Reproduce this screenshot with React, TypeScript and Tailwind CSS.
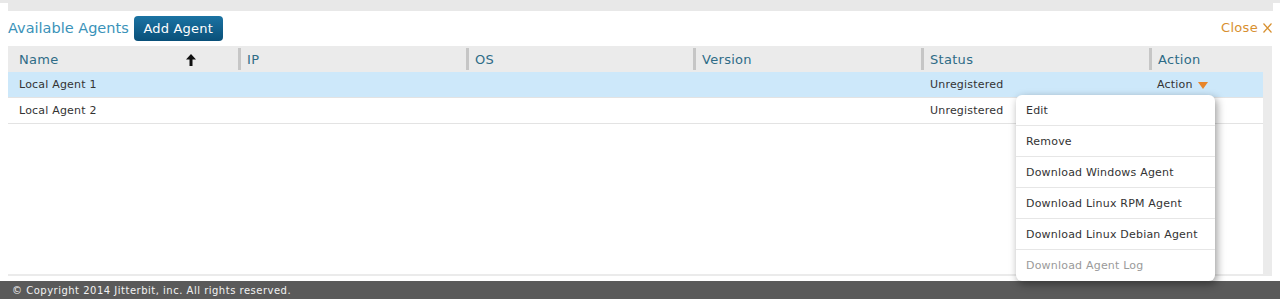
const columns = [
  { key: 'name', label: 'Name', width: 'w-[230px]', first: true },
  { key: 'ip', label: 'IP', width: 'w-[228px]' },
  { key: 'os', label: 'OS', width: 'w-[227px]' },
  { key: 'version', label: 'Version', width: 'w-[228px]' },
  { key: 'status', label: 'Status', width: 'w-[228px]' },
  { key: 'action', label: 'Action', width: 'flex-1' }
];

const agents = [
  { name: 'Local Agent 1', status: 'Unregistered', selected: true },
  { name: 'Local Agent 2', status: 'Unregistered', selected: false }
];

const menuItems = [
  { label: 'Edit' },
  { label: 'Remove' },
  { label: 'Download Windows Agent' },
  { label: 'Download Linux RPM Agent' },
  { label: 'Download Linux Debian Agent' },
  { label: 'Download Agent Log', disabled: true }
];

export default function App() {
  return (
    <div
      className="relative w-[1280px] h-[299px] bg-white flex flex-col overflow-hidden text-[#333]"
      style={{ fontFamily: '"DejaVu Sans", Verdana, sans-serif' }}
    >
      {/* top strip */}
      <div className="h-[3px] bg-[#e8e8e8]" />
      <div className="h-[8px] ml-[8px] mr-[7px] bg-[#e8e8e8]" />

      {/* Header */}
      <div className="h-[35px] flex items-center px-[8px]">
        <span className="text-[14.5px] text-[#3a92b9] mr-[5px] pt-[1px]">Available Agents</span>
        <button className="h-[25px] w-[89px] rounded-[4px] bg-gradient-to-b from-[#1b73a3] to-[#0a5079] text-white text-[13px] leading-none tracking-[0.2px]">
          Add Agent
        </button>
        <div className="ml-auto flex items-center gap-[5px] text-[13px] text-[#d8902f] tracking-[0.3px] pb-[1px]">
          <span>Close</span>
          <svg width="9" height="10" viewBox="0 0 9 10">
            <path d="M0.5 0.5 L8.5 9.5 M8.5 0.5 L0.5 9.5" stroke="#d8902f" strokeWidth="1.2" fill="none" />
          </svg>
        </div>
      </div>

      {/* Table */}
      <div className="mx-[8px] h-[230px] bg-[#ebebeb] flex flex-col">
        <div className="h-[26px] flex items-center text-[13px] text-[#2f6c87] tracking-[0.3px]">
          {columns.map((c) => (
            <div
              key={c.key}
              className={`${c.width} h-[22px] flex items-center pt-[2px] ${
                c.first ? 'pl-[11px] pr-[42px] justify-between' : 'border-l-[3px] border-[#c6c6c6] pl-[6px]'
              }`}
            >
              <span>{c.label}</span>
              {c.first && (
                <svg width="10" height="12" viewBox="0 0 10 12">
                  <path d="M5 0 L10 5.5 L6.5 5.5 L6.5 12 L3.5 12 L3.5 5.5 L0 5.5 Z" fill="#111" />
                </svg>
              )}
            </div>
          ))}
        </div>
        <div className="flex-1 flex mb-[2px]">
          <div className="flex-1 bg-white">
            {agents.map((a) => (
              <div
                key={a.name}
                className={`h-[26px] flex items-center pt-[2px] text-[11px] tracking-[0.2px] border-b border-[#e3e3e3] ${
                  a.selected ? 'bg-[#cde8fa]' : 'bg-white'
                }`}
              >
                <div className="w-[230px] pl-[11px]">{a.name}</div>
                <div className="w-[228px]" />
                <div className="w-[227px]" />
                <div className="w-[228px]" />
                <div className="w-[228px] pl-[9px]">{a.status}</div>
                <div className="flex-1 pl-[8px] flex items-center gap-[5px]">
                  {a.selected && (
                    <>
                      <span>Action</span>
                      <svg width="10" height="7" viewBox="0 0 10 7">
                        <path d="M0 0 L10 0 L5 7 Z" fill="#e8862b" />
                      </svg>
                    </>
                  )}
                </div>
              </div>
            ))}
          </div>
          <div className="w-[9px]" />
        </div>
      </div>

      <div className="flex-1" />

      {/* Footer */}
      <div className="h-[18px] bg-[#5a5a5a] flex items-center pl-[12px] pt-[1px] text-[10px] tracking-[0.5px] text-[#f2f2f2]">
        © Copyright 2014 Jitterbit, inc. All rights reserved.
      </div>

      {/* Action menu */}
      <div className="absolute left-[1016px] top-[95px] w-[199px] bg-white rounded-[6px] shadow-[2px_3px_8px_rgba(0,0,0,0.4)] text-[11px] tracking-[0.2px]">
        {menuItems.map((m, i) => (
          <div
            key={m.label}
            className={`h-[31px] flex items-center pl-[10px] pt-[2px] ${
              i < menuItems.length - 1 ? 'border-b border-[#e6e6e6]' : ''
            } ${m.disabled ? 'text-[#9a9a9a]' : 'text-[#333]'}`}
          >
            {m.label}
          </div>
        ))}
      </div>
    </div>
  );
}
